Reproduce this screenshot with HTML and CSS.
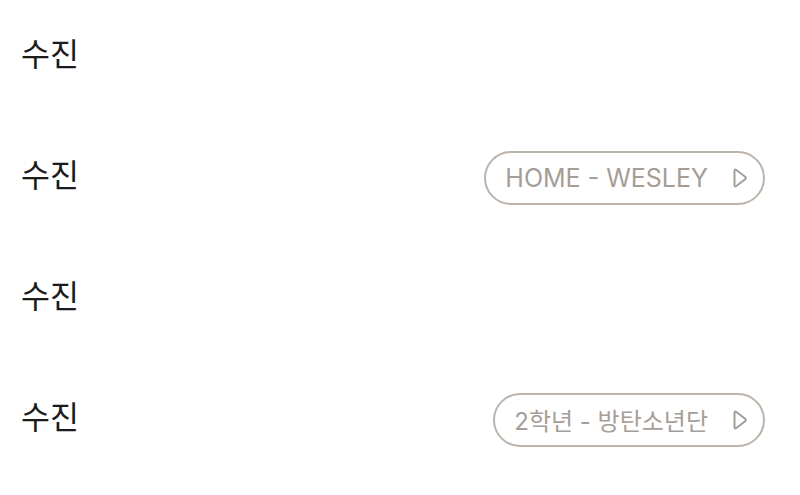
FILE: index.html
```html
<!DOCTYPE html>
<html lang="ko">
<head>
  <meta charset="UTF-8">
  <title>Members</title>
  <link rel="stylesheet" href="styles.css">
</head>
<body>
  <ul class="member-list">
    <li class="member-row">
      <span class="member-name">수진</span>
    </li>
    <li class="member-row">
      <span class="member-name">수진</span>
      <a class="link-pill" href="#">
        <span>HOME - WESLEY</span>
        <svg class="play-icon" viewBox="0 0 16 22" width="16" height="22">
          <path d="M2.5 4 Q2.5 1.8 4.3 3 L13.2 9.8 Q14.4 11 13.2 12.2 L4.3 19 Q2.5 20.2 2.5 18 Z" />
        </svg>
      </a>
    </li>
    <li class="member-row">
      <span class="member-name">수진</span>
    </li>
    <li class="member-row">
      <span class="member-name">수진</span>
      <a class="link-pill" href="#">
        <span class="pill-ko">2학년 - 방탄소년단</span>
        <svg class="play-icon" viewBox="0 0 16 22" width="16" height="22">
          <path d="M2.5 4 Q2.5 1.8 4.3 3 L13.2 9.8 Q14.4 11 13.2 12.2 L4.3 19 Q2.5 20.2 2.5 18 Z" />
        </svg>
      </a>
    </li>
  </ul>
</body>
</html>
```

FILE: styles.css
```css
body {
  margin: 0;
  background: #fff;
  font-family: Inter, "Noto Sans CJK KR", sans-serif;
}
.member-list {
  list-style: none;
  margin: 0;
  padding: 0 35px 0 21px;
  display: flex;
  flex-direction: column;
  gap: 17px;
}
.member-row {
  height: 104px;
  display: flex;
  align-items: center;
  justify-content: space-between;
}
.member-name {
  font-family: "Noto Sans CJK KR", sans-serif;
  font-size: 31.5px;
  color: #1b1b1b;
}
.link-pill {
  display: flex;
  align-items: center;
  gap: 24px;
  height: 50px;
  margin-top: 9px;
  padding: 0 15px 0 19px;
  border: 2px solid #bcb3ab;
  border-radius: 27px;
  color: #a59d96;
  font-size: 25px;
  text-decoration: none;
}
.pill-ko {
  font-size: 24px;
}
.play-icon path {
  fill: none;
  stroke: #a59d96;
  stroke-width: 2;
  stroke-linejoin: round;
}
```
